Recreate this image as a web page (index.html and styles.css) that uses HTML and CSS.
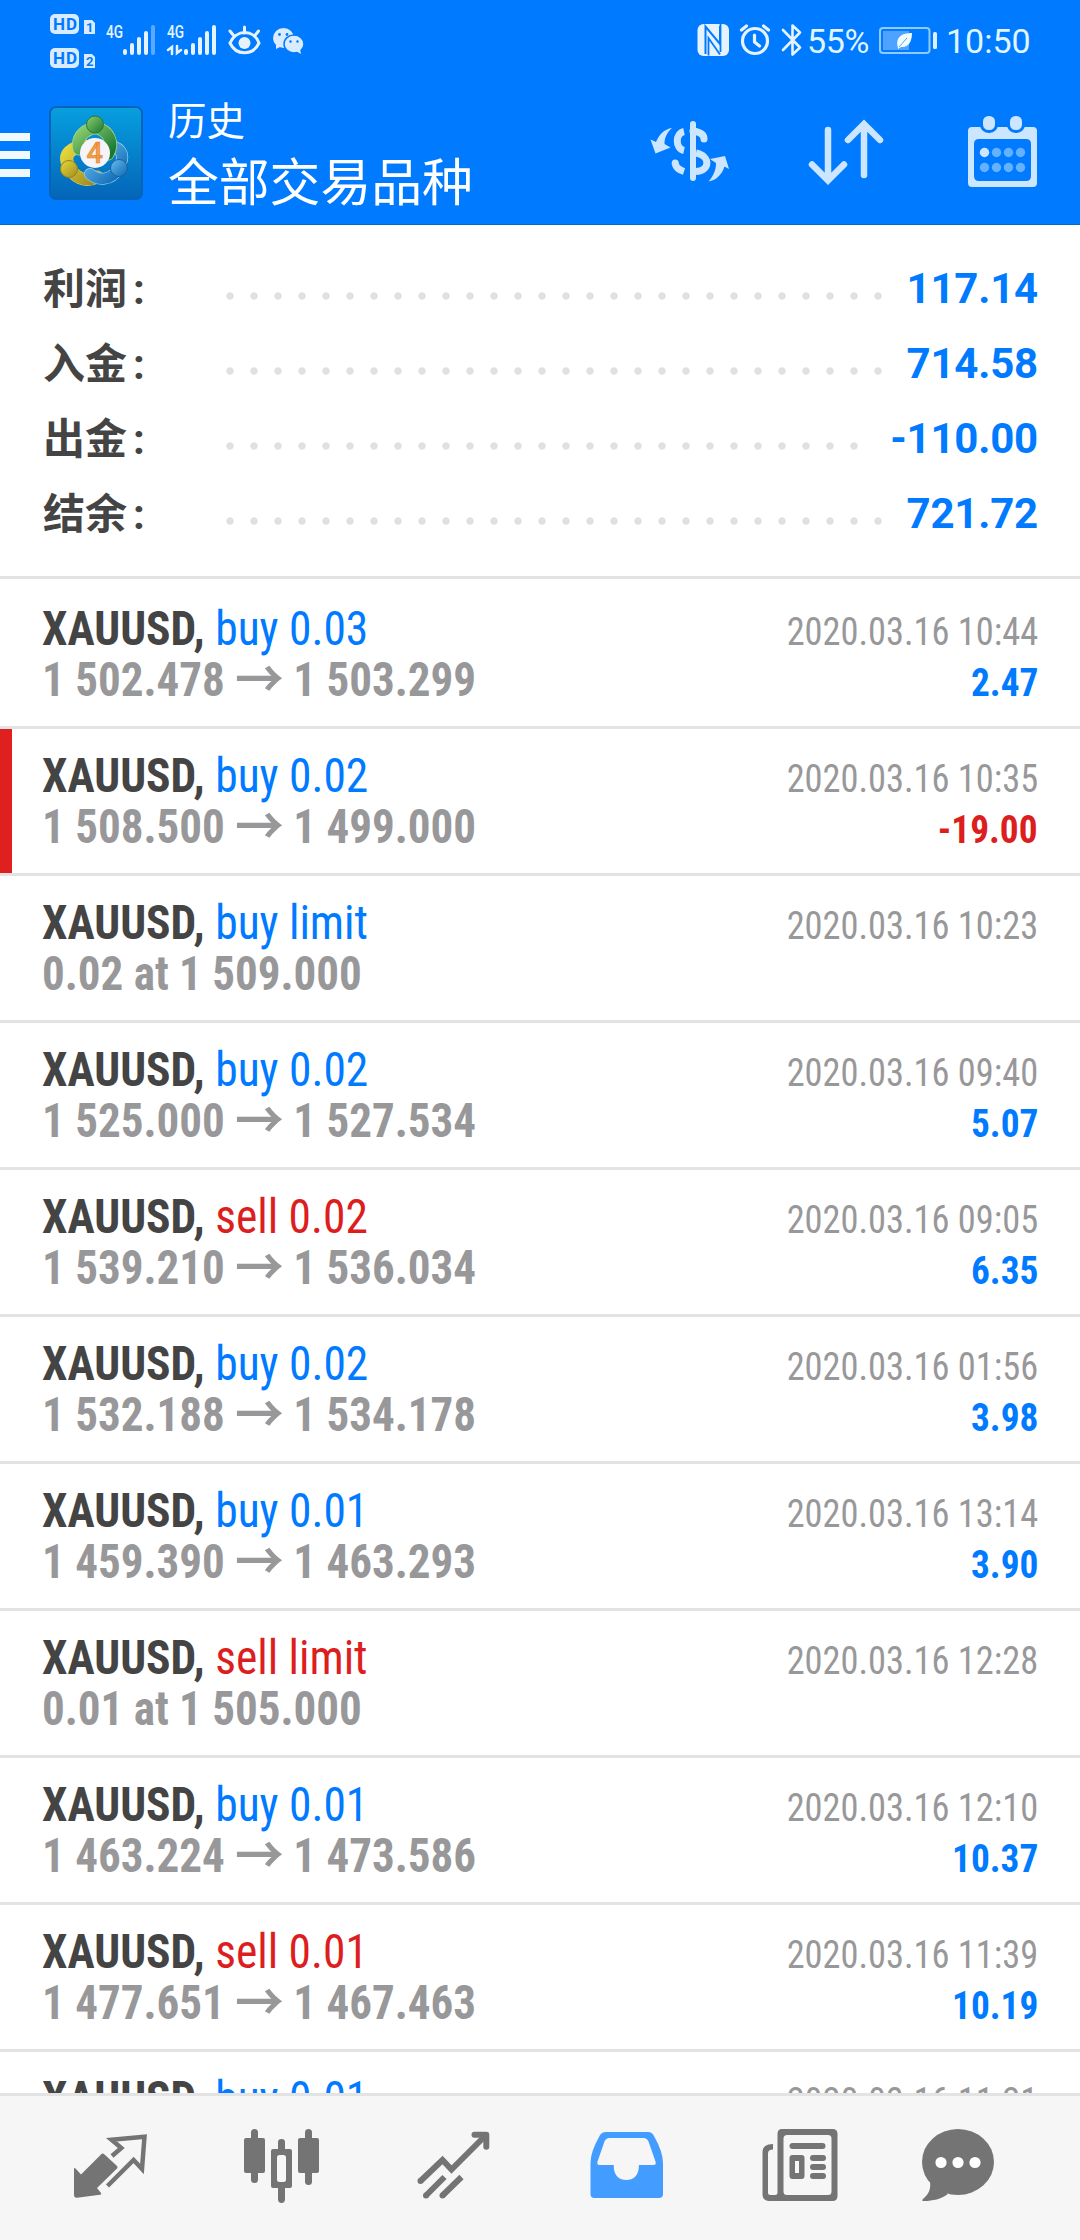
FILE: index.html
```html
<!DOCTYPE html>
<html lang="zh-CN">
<head>
<meta charset="utf-8">
<title>历史</title>
<link rel="stylesheet" href="styles.css">
</head>
<body>
<div class="app">
<header class="header">
  <div class="status">
    <svg class="status-left" viewBox="50 0 256 82" width="256" height="82">
      <g fill="#d9ecff">
        <rect x="50" y="14" width="29" height="20" rx="5"/><path d="M84 20h8l3 3v11H84z"/>
        <rect x="50" y="48" width="29" height="20" rx="5"/><path d="M84 54h8l3 3v11H84z"/>
      </g>
      <g class="hd"><text x="53" y="30" textLength="24">HD</text><text x="53" y="64" textLength="24">HD</text></g>
      <g class="sim"><text x="86" y="32">1</text><text x="86" y="66">2</text></g>
      <g class="net"><text x="106" y="38" textLength="17" lengthAdjust="spacingAndGlyphs">4G</text><text x="167" y="38" textLength="17" lengthAdjust="spacingAndGlyphs">4G</text></g>
      <g fill="none" stroke="#e6f3ff" stroke-width="4" stroke-linecap="round">
        <path d="M125 51v2M132 45v8M139 39v14M146 33v20M186 51v2M193 45v8M200 39v14M207 33v20M214 27v26"/>
        <path d="M153 27v26" opacity=".4"/>
        <path d="M172 54v-7l-4 3M177 46v7l4-3" stroke-width="2.500"/>
        <path d="M230 43c6-14 24-14 29 0-6 13-23 13-29 0z" stroke-width="3"/>
        <path d="M244.500 27v6M230 31l4 5M258.500 31l-4 5" stroke-width="3"/>
      </g>
      <circle cx="244.500" cy="43" r="6" fill="#e6f3ff"/>
      <g fill="#d9ecff">
        <ellipse cx="283.500" cy="38" rx="10.500" ry="10"/><path d="M276 44v5l6-3z"/>
        <ellipse cx="294" cy="44" rx="10" ry="9" stroke="#007aff" stroke-width="1.500"/><path d="M296 51l5 3-1-5z"/>
      </g>
      <g fill="#007aff"><circle cx="279.500" cy="34.500" r="1.400"/><circle cx="287" cy="34.500" r="1.400"/><circle cx="290.500" cy="41.500" r="1.200"/><circle cx="297.500" cy="41.500" r="1.200"/></g>
    </svg>
    <svg class="status-mid" viewBox="697 0 106 82" width="106" height="82">
      <rect x="697.500" y="24" width="31.500" height="32" rx="6" fill="#e6f3ff"/>
      <g fill="none" stroke="#007aff" stroke-width="2"><path d="M705.500 54V26.500l14.500 17.500V26"/><path d="M720.500 24v28M708.500 55.500V38L720 54.500" stroke-width="1.800"/></g>
      <g fill="none" stroke="#e6f3ff" stroke-width="3.200" stroke-linecap="round" stroke-linejoin="round">
        <circle cx="755" cy="41" r="12.500"/><path d="M754.500 35v7l5 4M741.500 30l5-4M768.500 30l-5-4"/>
        <path d="M783 30l17 17.500-7.500 7V25.500l7.500 7-17 17.500" stroke-width="2.600"/>
      </g>
    </svg>
    <span class="battery-text">55%</span>
    <svg class="battery" viewBox="879 0 60 82" width="60" height="82">
      <rect x="880" y="28" width="49.500" height="25" rx="3" fill="none" stroke="#8fcbff" stroke-width="2"/>
      <rect x="883" y="31" width="26" height="19" fill="#4da3ff"/><rect x="933" y="32" width="4" height="17" rx="1.500" fill="#d9f0ff"/>
      <path d="M898 48c-3-11 4-15 14-15 0 9-4 15-11 14l-3 2z" fill="#f2ffff"/><path d="M899 47l8-9" stroke="#4da3ff" fill="none"/>
    </svg>
    <time class="clock">10:50</time>
  </div>
  <div class="toolbar">
    <svg class="menu" viewBox="0 0 30 44" width="30" height="44"><path d="M0 4h30M0 22h30M0 40h30" stroke="#f0f9ff" stroke-width="8"/></svg>
    <svg class="logo" viewBox="0 0 94 94" width="94" height="94">
      <defs>
        <linearGradient id="tile" x1="0" y1="0" x2="0" y2="1"><stop offset="0" stop-color="#079fe0"/><stop offset="1" stop-color="#0465b8"/></linearGradient>
        <linearGradient id="green" x1="0" y1="0" x2="1" y2="1"><stop offset="0" stop-color="#8fce70"/><stop offset="1" stop-color="#17782f"/></linearGradient>
        <linearGradient id="gold" x1="0" y1="0" x2="1" y2="1"><stop offset="0" stop-color="#e6da3a"/><stop offset="1" stop-color="#a08c20"/></linearGradient>
        <linearGradient id="blue" x1="0" y1="0" x2="1" y2="1"><stop offset="0" stop-color="#6cbcea"/><stop offset="1" stop-color="#0b68b6"/></linearGradient>
      </defs>
      <rect x="1" y="1" width="92" height="92" rx="6" fill="url(#tile)" stroke="#0563b8" stroke-width="2"/>
      <g fill="none" stroke-linecap="round">
        <path d="M20 60C13 48 23 41 36 40M21 63c8 12 19 12 27 8" stroke="#d9d060" stroke-width="13"/>
        <path d="M20 60C13 48 23 41 36 40M21 63c8 12 19 12 27 8" stroke="url(#gold)" stroke-width="11.500"/>
        <path d="M70 60c6-8 3-16-4-19M69 63c-7 12-20 12-28 5" stroke="#8fcdf0" stroke-width="12"/>
        <path d="M70 60c6-8 3-16-4-19M69 63c-7 12-20 12-28 5" stroke="url(#blue)" stroke-width="10.500"/>
        <path d="M45 22c-13 3-17 12-15 21M48 22c12 3 17 15 11 26" stroke="#a5d68a" stroke-width="13"/>
        <path d="M45 22c-13 3-17 12-15 21M48 22c12 3 17 15 11 26" stroke="url(#green)" stroke-width="11.500"/>
      </g>
      <circle cx="46" cy="18.500" r="8.500" fill="url(#green)" stroke="#27793b"/><circle cx="20" cy="63" r="8.500" fill="url(#gold)" stroke="#91841e"/><circle cx="70" cy="62" r="8.500" fill="url(#blue)" stroke="#17609e"/>
      <circle cx="46" cy="47" r="15" fill="#f6f4fa"/>
      <text class="logo-num" x="37.500" y="56.500">4</text>
    </svg>
    <div class="titles"><div class="title">历史</div><div class="subtitle">全部交易品种</div></div>
    <div class="actions">
      <svg viewBox="648 112 84 80" width="84" height="80">
        <path d="M693 124v54" stroke="#cce6ff" stroke-width="6" stroke-linecap="round"/>
        <g fill="none" stroke="#cce6ff" stroke-width="7"><path d="M693 131c8 1 11 4 11 8" stroke-linecap="round"/><path d="M684 131.500c-9 2-9 17 0 19M696 153c15 3 14 18 0 18.500"/><path d="M675 163c1 5 4 7 9 8.500"/></g><circle cx="675.200" cy="163" r="3.500" fill="#cce6ff"/>
        <g fill="#cce6ff"><path d="M672 128c-8 1-13 7-16 14l-5.500-2.500 5 14 15-6-6-3.500c0-7 3-12 7.500-16z"/><path d="M708.500 181.500c8-1 14-8 16-15l4.500 2.500-4-13-15 3 6 4c0 7-2.500 13-7.500 18.500z"/></g>
      </svg>
      <svg viewBox="804 112 84 80" width="84" height="80"><path d="M828 130v50M812 164.500l16 16 16-16M864 175v-50M848 140l16-16 16 16" fill="none" stroke="#cce6ff" stroke-width="6.500" stroke-linecap="round"/></svg>
      <svg viewBox="960 112 84 80" width="84" height="80">
        <path fill-rule="evenodd" fill="#cce6ff" d="M972 127h61q4 0 4 4v52q0 4-4 4h-61q-4 0-4-4v-52q0-4 4-4zM979 139q-5 0-5 5v32q0 5 5 5h47q5 0 5-5v-32q0-5-5-5z"/>
        <g fill="#cce6ff" stroke="#007aff" stroke-width="3"><rect x="981.500" y="114.500" width="15" height="17" rx="7"/><rect x="1008.500" y="114.500" width="15" height="17" rx="7"/></g>
        <circle cx="984.500" cy="152.500" r="4.700" fill="#cce6ff"/>
        <g fill="#64b1ff"><circle cx="996.500" cy="152.500" r="4.700"/><circle cx="1008.500" cy="152.500" r="4.700"/><circle cx="1020.500" cy="152.500" r="4.700"/><circle cx="984.500" cy="167.500" r="4.700"/><circle cx="996.500" cy="167.500" r="4.700"/><circle cx="1008.500" cy="167.500" r="4.700"/><circle cx="1020.500" cy="167.500" r="4.700"/></g>
      </svg>
    </div>
  </div>
</header>

<section class="summary">
  <div class="sum-row"><span class="sum-label">利润<span class="colon">:</span></span><span class="dots"></span><span class="sum-value">117.14</span></div>
  <div class="sum-row"><span class="sum-label">入金<span class="colon">:</span></span><span class="dots"></span><span class="sum-value">714.58</span></div>
  <div class="sum-row"><span class="sum-label">出金<span class="colon">:</span></span><span class="dots dots-short"></span><span class="sum-value">-110.00</span></div>
  <div class="sum-row"><span class="sum-label">结余<span class="colon">:</span></span><span class="dots"></span><span class="sum-value">721.72</span></div>
</section>

<main class="deals">
  <article class="deal"><div class="line"><span class="symbol">XAUUSD, <span class="buy">buy 0.03</span></span><time class="date">2020.03.16 10:44</time></div><div class="line"><span class="price">1 502.478 <span class="arrow">→</span> 1 503.299</span><span class="profit">2.47</span></div></article>
  <article class="deal stopped"><div class="line"><span class="symbol">XAUUSD, <span class="buy">buy 0.02</span></span><time class="date">2020.03.16 10:35</time></div><div class="line"><span class="price">1 508.500 <span class="arrow">→</span> 1 499.000</span><span class="profit loss">-19.00</span></div></article>
  <article class="deal"><div class="line"><span class="symbol">XAUUSD, <span class="buy">buy limit</span></span><time class="date">2020.03.16 10:23</time></div><div class="line"><span class="price">0.02 at 1 509.000</span></div></article>
  <article class="deal"><div class="line"><span class="symbol">XAUUSD, <span class="buy">buy 0.02</span></span><time class="date">2020.03.16 09:40</time></div><div class="line"><span class="price">1 525.000 <span class="arrow">→</span> 1 527.534</span><span class="profit">5.07</span></div></article>
  <article class="deal"><div class="line"><span class="symbol">XAUUSD, <span class="sell">sell 0.02</span></span><time class="date">2020.03.16 09:05</time></div><div class="line"><span class="price">1 539.210 <span class="arrow">→</span> 1 536.034</span><span class="profit">6.35</span></div></article>
  <article class="deal"><div class="line"><span class="symbol">XAUUSD, <span class="buy">buy 0.02</span></span><time class="date">2020.03.16 01:56</time></div><div class="line"><span class="price">1 532.188 <span class="arrow">→</span> 1 534.178</span><span class="profit">3.98</span></div></article>
  <article class="deal"><div class="line"><span class="symbol">XAUUSD, <span class="buy">buy 0.01</span></span><time class="date">2020.03.16 13:14</time></div><div class="line"><span class="price">1 459.390 <span class="arrow">→</span> 1 463.293</span><span class="profit">3.90</span></div></article>
  <article class="deal"><div class="line"><span class="symbol">XAUUSD, <span class="sell">sell limit</span></span><time class="date">2020.03.16 12:28</time></div><div class="line"><span class="price">0.01 at 1 505.000</span></div></article>
  <article class="deal"><div class="line"><span class="symbol">XAUUSD, <span class="buy">buy 0.01</span></span><time class="date">2020.03.16 12:10</time></div><div class="line"><span class="price">1 463.224 <span class="arrow">→</span> 1 473.586</span><span class="profit">10.37</span></div></article>
  <article class="deal"><div class="line"><span class="symbol">XAUUSD, <span class="sell">sell 0.01</span></span><time class="date">2020.03.16 11:39</time></div><div class="line"><span class="price">1 477.651 <span class="arrow">→</span> 1 467.463</span><span class="profit">10.19</span></div></article>
  <article class="deal"><div class="line"><span class="symbol">XAUUSD, <span class="buy">buy 0.01</span></span><time class="date">2020.03.16 11:21</time></div></article>
</main>

<nav class="tabs">
  <svg viewBox="24 2096 172 144"><path d="M74 2169q0-2 2 0l5 5.500 20-20q1.600-2 3.500 0l12 11q2 2 0 3.500L97 2188l4 5q1 1.500-1 1.700l-23 3q-3 .300-3-3z" fill="#747474"/><path d="M112 2156l9.300-8-9.800-8.300 33-3-2.500 32.300-8.400-9L107.500 2186" fill="none" stroke="#747474" stroke-width="4.500"/></svg>
  <svg viewBox="196 2096 172 144" fill="#747474"><rect x="244" y="2138" width="21" height="35" rx="2"/><rect x="251" y="2129" width="7" height="54" rx="3.500"/><path fill-rule="evenodd" d="M273 2149h17q2 0 2 2v35q0 2-2 2h-17q-2 0-2-2v-35q0-2 2-2zM279.500 2155q-2.500 0-2.500 2.500v22q0 2.500 2.500 2.500h4q2.500 0 2.500-2.500v-22q0-2.500-2.500-2.500z"/><path d="M278 2150v-8q0-3 3.500-3t3.500 3v8zM278 2187v12q0 4 3.500 4t3.500-4v-12z"/><rect x="298" y="2138" width="21" height="35" rx="2"/><rect x="305" y="2129" width="7" height="56" rx="3.500"/></svg>
  <svg viewBox="368 2096 172 144" fill="none" stroke="#747474" stroke-width="6"><path d="M420.500 2181l22-21 9 9.500 35-35" stroke-linejoin="miter"/><path d="M474.500 2134.800h11.800v12" stroke-linecap="round" stroke-linejoin="round"/><path d="M426 2195.500l18.500-18.500M442.500 2195.500l19-18.500"/><g fill="#747474" stroke="none"><circle cx="420.500" cy="2181" r="3"/><circle cx="426" cy="2195.500" r="3"/><circle cx="442.500" cy="2195.500" r="3"/></g></svg>
  <svg viewBox="540 2096 172 144"><path fill-rule="evenodd" fill="#439cff" d="M606 2132h42q4 0 6 4 9 16 9 27v31q0 4-4 4h-64.500q-4 0-4-4v-31q0-11 9-27 2-4 6.500-4zM609.500 2138q-3.500 0-5 3.500l-7 20q-.800 3.500 2 3.500h14.300v3q1.500 12 12.500 12t12.500-12v-3h14.700q3 0 2-3.500l-7-20q-1.500-3.500-5-3.500z"/></svg>
  <svg viewBox="712 2096 172 144" fill="#747474"><path fill-rule="evenodd" d="M782 2129h50.500q5 0 5 5v62q0 5-5 5H769q-6.500 0-6.500-6.500V2152q0-8 10.500-8v5.500q-5 0-5 4v39q0 2.500 2.500 2.500h4.500q2.500 0 2.500-2.500v-58.500q0-5 4.500-5zM787 2135q-3.500 0-3.500 3.500v53q0 3.500 3.500 3.500h41q3.500 0 3.500-3.500v-53q0-3.500-3.500-3.500z"/><rect x="789.500" y="2143" width="36" height="6" rx="3"/><path fill-rule="evenodd" d="M792.500 2155h9q3 0 3 3v18q0 3-3 3h-9q-3 0-3-3v-18q0-3 3-3zM795 2161v12h4v-12z"/><rect x="810" y="2155" width="16" height="6" rx="3"/><rect x="810" y="2164" width="16" height="6" rx="3"/><rect x="810" y="2173" width="16" height="6" rx="3"/></svg>
  <svg viewBox="884 2096 172 144"><ellipse cx="958" cy="2162" rx="36" ry="33" fill="#747474"/><path d="M930 2181c1 8-1 13-7 18q-2 2 1 2c9 0 17-2 24-7z" fill="#747474"/><g fill="#fff"><circle cx="941" cy="2162.500" r="5.600"/><circle cx="958" cy="2162.500" r="5.600"/><circle cx="975" cy="2162.500" r="5.600"/></g></svg>
</nav>
</div>
</body>
</html>
```

FILE: styles.css
```css
* { box-sizing: border-box; }
body { margin: 0; background: #fff; }
.app {
  width: 1080px; height: 2240px; overflow: hidden;
  display: flex; flex-direction: column;
  font-family: Roboto, "Noto Sans CJK SC", sans-serif;
}
svg { display: block; flex: none; }

.header { height: 225px; flex: none; background: #007aff; border-bottom: 1px solid #0a66c8; }
.status { display: flex; height: 82px; padding-left: 50px; color: #dff5ff; font-size: 34px; line-height: 82px; }
.status-mid { margin-left: 391px; }
.battery-text { width: 72px; margin-left: 4px; letter-spacing: -0.3px; }
.clock { margin-left: 7px; }
.hd { font: 700 17px Roboto, sans-serif; fill: #007aff; }
.sim { font: 700 13px Roboto, sans-serif; fill: #007aff; }
.net { font: 500 18px Roboto, sans-serif; fill: #e6f3ff; }

.toolbar { display: flex; height: 142px; padding-right: 36px; }
.menu { margin-top: 51px; }
.logo { margin: 24px 0 0 19px; }
.logo-num { font: 500 29px Roboto, sans-serif; fill: #f0a04a; stroke: #e8822c; stroke-width: 0.6px; }
.titles { margin-left: 25px; color: #fff; white-space: nowrap; }
.title { margin-top: 13px; font-size: 38.5px; line-height: 54px; }
.subtitle { margin-top: 2px; font-size: 50.8px; line-height: 66px; }
.actions { display: flex; gap: 72px; margin: 30px 0 0 auto; }

.summary { height: 354px; flex: none; padding: 26px 42px 0; border-bottom: 3px solid #e3e3e3; }
.sum-row { display: flex; height: 75px; line-height: 75px; font-size: 42px; font-weight: 700; }
.sum-label { width: 175px; margin-left: 1px; line-height: 77px; color: #444; }
.colon { margin-left: 6px; }
.dots { width: 672px; height: 24px; margin-top: 33px; background: radial-gradient(circle, #e0e0e0 3.2px, transparent 4.2px) 0 0 / 24px 24px; }
.dots-short { width: 648px; }
.sum-value { margin-left: auto; color: #007aff; letter-spacing: -0.2px; }

.deals { flex: 1; min-height: 0; overflow: hidden; padding-top: 3px; }
.deal {
  height: 147px; padding: 21px 42px 0; border-bottom: 3px solid #e3e3e3;
  font-family: "Roboto Condensed", Roboto, "Noto Sans CJK SC", sans-serif; font-stretch: 75%;
}
.stopped { background: linear-gradient(#e01f1f, #e01f1f) no-repeat 0 0 / 12px 100%; }
.line { display: flex; justify-content: space-between; align-items: baseline; height: 51px; line-height: 51px; font-size: 48px; white-space: nowrap; }

/* Row text is set slightly narrower than the condensed face */
.symbol, .price { transform: scaleX(0.947); transform-origin: left; }
.date, .profit { transform: scaleX(0.945); transform-origin: right; }
.symbol { font-weight: 700; color: #444; }
.buy, .sell { font-weight: 400; }
.buy { color: #007aff; }
.sell { color: #dc1e1e; }
.price { transform: scaleX(0.938); font-weight: 700; color: #98989a; }
.arrow { display: inline-block; height: 30px; margin: 0 -1px 0 0; vertical-align: -2px; font-family: "Noto Sans CJK SC", sans-serif; font-size: 52px; line-height: 30px; }
.date { font-size: 38.5px; color: #98989a; }
.profit { font-size: 39.5px; font-weight: 700; color: #007aff; }
.loss { color: #dc1e1e; }

.tabs { display: flex; height: 147px; flex: none; padding: 0 24px; background: #f6f6f6; border-top: 3px solid #e3e3e3; }
.tabs svg { width: 172px; height: 144px; }
```
